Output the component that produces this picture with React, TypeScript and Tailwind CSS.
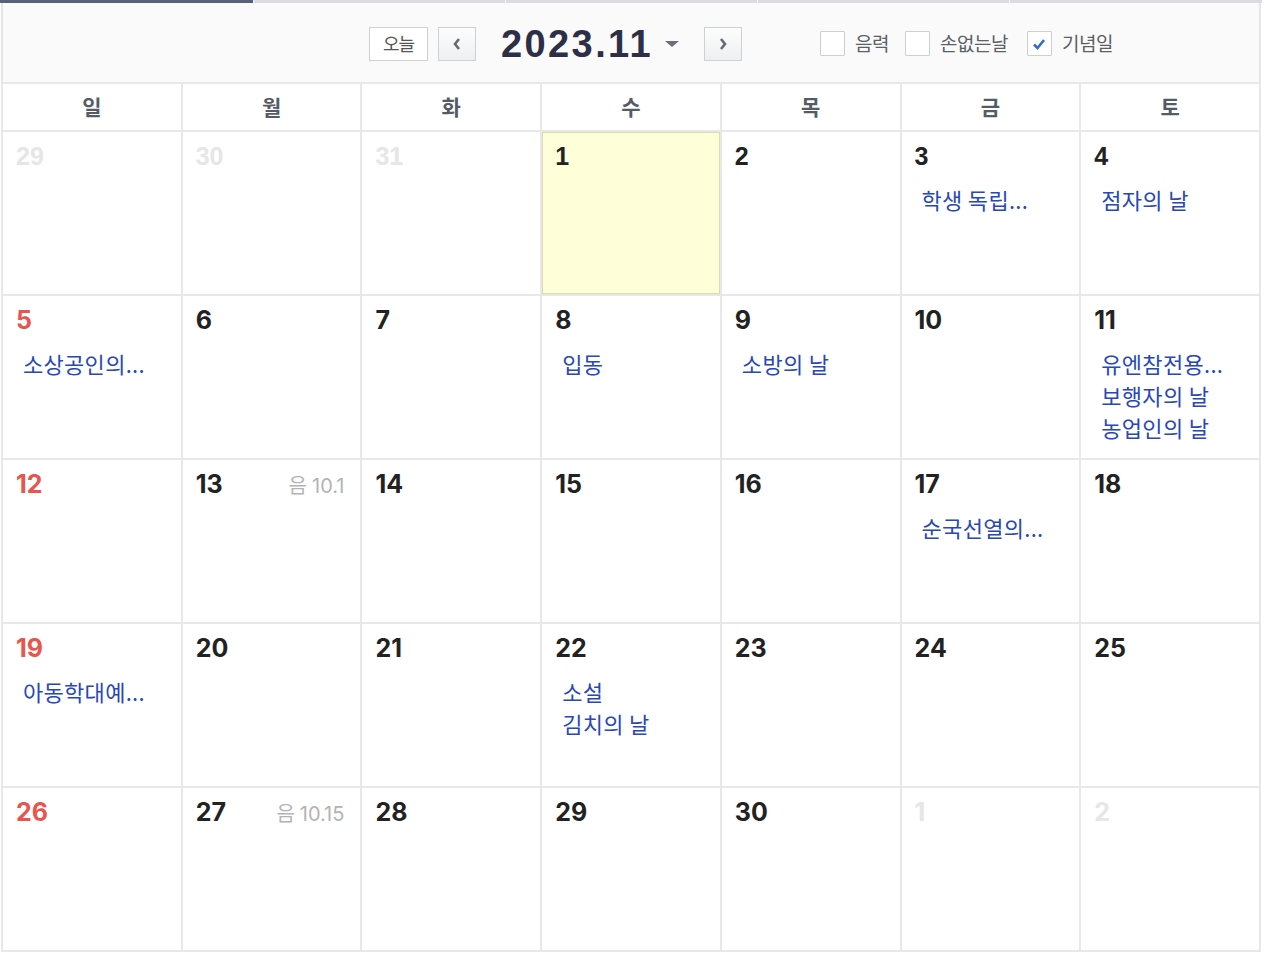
import React from "react";

type Day = {
  d: number;
  muted?: boolean;
  today?: boolean;
  lunar?: string;
  events?: string[];
};

const weeks: Day[][] = [
  [
    { d: 29, muted: true },
    { d: 30, muted: true },
    { d: 31, muted: true },
    { d: 1, today: true },
    { d: 2 },
    { d: 3, events: ["학생 독립..."] },
    { d: 4, events: ["점자의 날"] },
  ],
  [
    { d: 5, events: ["소상공인의..."] },
    { d: 6 },
    { d: 7 },
    { d: 8, events: ["입동"] },
    { d: 9, events: ["소방의 날"] },
    { d: 10 },
    { d: 11, events: ["유엔참전용...", "보행자의 날", "농업인의 날"] },
  ],
  [
    { d: 12 },
    { d: 13, lunar: "10.1" },
    { d: 14 },
    { d: 15 },
    { d: 16 },
    { d: 17, events: ["순국선열의..."] },
    { d: 18 },
  ],
  [
    { d: 19, events: ["아동학대예..."] },
    { d: 20 },
    { d: 21 },
    { d: 22, events: ["소설", "김치의 날"] },
    { d: 23 },
    { d: 24 },
    { d: 25 },
  ],
  [
    { d: 26 },
    { d: 27, lunar: "10.15" },
    { d: 28 },
    { d: 29 },
    { d: 30 },
    { d: 1, muted: true },
    { d: 2, muted: true },
  ],
];

const dayNames = ["일", "월", "화", "수", "목", "금", "토"];

const kr = { fontFamily: '"Noto Sans CJK KR", "Noto Sans", sans-serif' };

function Checkbox({ label, checked }: { label: string; checked?: boolean }) {
  return (
    <label className="flex items-center gap-[10px]">
      <span className="w-[25px] h-[25px] border border-[#cfcfcf] bg-white flex items-center justify-center rounded-[1px]">
        {checked && (
          <svg width="14" height="12" viewBox="0 0 14 12">
            <path d="M2 6.5 L5.5 10 L12 2" fill="none" stroke="#3b6cc4" strokeWidth="2.6" />
          </svg>
        )}
      </span>
      <span className="text-[19px] text-[#5b5f66] tracking-[-0.5px]" style={kr}>
        {label}
      </span>
    </label>
  );
}

function Arrow({ dir }: { dir: "left" | "right" }) {
  return (
    <button className="w-[38px] h-[34px] border border-[#cdd0d4] bg-gradient-to-b from-[#fdfdfd] to-[#eeeff1] flex items-center justify-center">
      <svg width="10" height="14" viewBox="0 0 10 14">
        <path
          d={dir === "left" ? "M7 2 L3 7 L7 12" : "M3 2 L7 7 L3 12"}
          fill="none"
          stroke="#666b73"
          strokeWidth="2.6"
        />
      </svg>
    </button>
  );
}

function Cell({ day, col, first }: { day: Day; col: number; first: boolean }) {
  const numColor = day.muted
    ? "text-[#e6e6e6]"
    : col === 0
      ? "text-[#e8554e]"
      : "text-[#222222]";
  const numFont = first
    ? { fontFamily: '"Liberation Sans", Arial, sans-serif' }
    : { fontFamily: 'Inter, "Liberation Sans", sans-serif' };
  return (
    <div
      className={`h-[162px] pl-[13px] pr-[16px] pt-[12px] ${
        day.today ? "bg-[#fefed9] shadow-[inset_0_0_0_1px_#dcdbb0]" : "bg-white"
      }`}
    >
      <div className="flex items-baseline justify-between">
        <span className={`text-[25px] leading-none font-bold ${numColor}`} style={numFont}>
          {day.d}
        </span>
        {day.lunar && (
          <span className="text-[20px] leading-none text-[#b4b4b4] flex items-baseline gap-[5px]">
            <span style={kr}>음</span>
            <span style={{ fontFamily: "Inter, sans-serif" }}>{day.lunar}</span>
          </span>
        )}
      </div>
      {day.events && (
        <div className="mt-[14px] pl-[7px]">
          {day.events.map((e) => (
            <div key={e} className="h-[32px] leading-[32px] text-[22px] tracking-[0.3px] text-[#2748b6]" style={kr}>
              {e}
            </div>
          ))}
        </div>
      )}
    </div>
  );
}

export default function App() {
  return (
    <div className="w-[1264px] h-[956px] bg-white">
      {/* tab strip */}
      <div className="flex h-[3px]">
        <div className="w-[253px] bg-[#56627a]" />
        <div className="w-[252px] bg-[#d9dce1] border-l border-[#f4f5f6]" />
        <div className="w-[252px] bg-[#d9dce1] border-l border-[#f4f5f6]" />
        <div className="w-[252px] bg-[#d9dce1] border-l border-[#f4f5f6]" />
        <div className="w-[253px] bg-[#d9dce1] border-l border-[#f4f5f6]" />
      </div>

      <div className="ml-px w-[1260px]">
        {/* toolbar */}
        <div className="h-[79px] bg-[#fafafa] border-x-2 border-[#e6e6e6] flex items-center pt-[2px]">
          <div className="ml-[366px] flex items-center">
            <button
              className="w-[59px] h-[34px] border border-[#cdd0d4] bg-white text-[18px] text-[#555] tracking-[-1px]"
              style={kr}
            >
              오늘
            </button>
            <div className="ml-[10px]">
              <Arrow dir="left" />
            </div>
            <span
              className="ml-[25px] text-[38px] leading-none font-bold text-[#2c2f45] tracking-[2.4px]"
              style={{ fontFamily: '"Liberation Sans", Arial, sans-serif' }}
            >
              2023.11
            </span>
            <svg className="ml-[11px]" width="16" height="8" viewBox="0 0 16 8">
              <path d="M1 1 L15 1 L8 7 Z" fill="#6b6f78" />
            </svg>
            <div className="ml-[24px]">
              <Arrow dir="right" />
            </div>
            <div className="ml-[78px] flex items-center">
              <Checkbox label="음력" />
              <div className="w-[16px]" />
              <Checkbox label="손없는날" />
              <div className="w-[19px]" />
              <Checkbox label="기념일" checked />
            </div>
          </div>
        </div>

        {/* grid */}
        <div className="grid grid-cols-7 gap-[2px] p-[2px] bg-[#e8e8e8]">
          {dayNames.map((n) => (
            <div
              key={n}
              className="h-[46px] bg-white flex items-center justify-center text-[21px] font-bold text-[#555b66]"
              style={kr}
            >
              {n}
            </div>
          ))}
          {weeks.map((w, wi) =>
            w.map((day, ci) => <Cell key={`${wi}-${ci}`} day={day} col={ci} first={wi === 0} />)
          )}
        </div>
      </div>
    </div>
  );
}
